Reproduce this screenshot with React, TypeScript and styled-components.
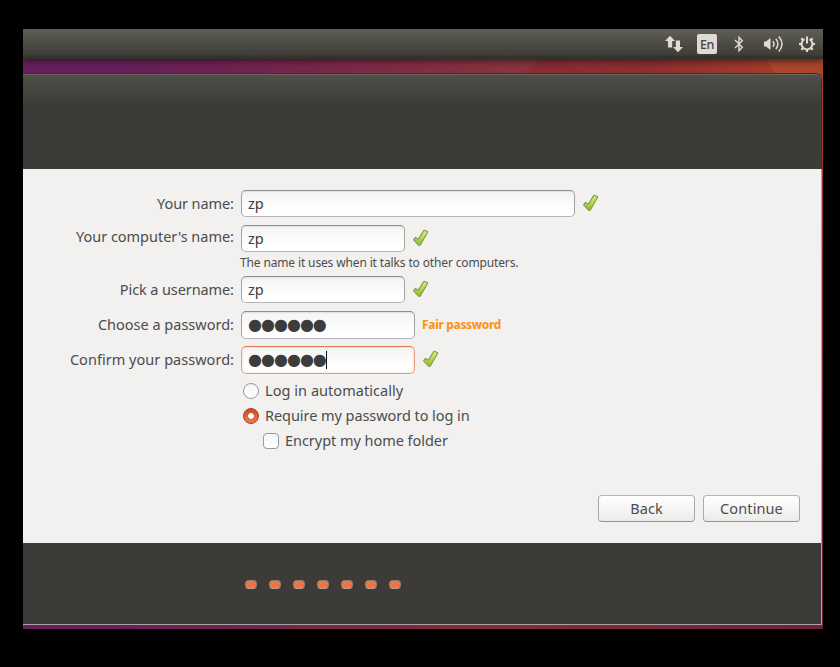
import React from "react";
import styled, { createGlobalStyle, css } from "styled-components";

const Global = createGlobalStyle`
  * { box-sizing: border-box; }
  html, body { margin: 0; background: #000; }
  body { font-family: "Noto Sans", "Open Sans", sans-serif; font-size: 14.5px; color: #4c4c4c; }
`;

const Screen = styled.div`
  width: 840px;
  height: 667px;
  padding: 29px 17px 38px 23px;
  background: #000;
  overflow: hidden;
`;

const Desktop = styled.div`
  width: 800px;
  height: 600px;
  display: flex;
  flex-direction: column;
  background:
    linear-gradient(90deg, transparent 40%, rgba(150, 70, 80, 0.25)) 0 30px / 499px 14px no-repeat,
    linear-gradient(126deg, rgba(150, 70, 80, 0.25) 50%, transparent 52%) 499px 30px / 20px 14px no-repeat,
    linear-gradient(66deg, transparent 48%, rgba(190, 90, 50, 0.3) 50%) 738px 30px / 20px 14px no-repeat,
    linear-gradient(90deg, rgba(190, 90, 50, 0.3), rgba(190, 90, 50, 0.15)) 758px 30px / 42px 14px no-repeat,
    radial-gradient(ellipse 420px 440px at 810px 20px, #ad432a 0%, #8e302f 42%, transparent 100%),
    linear-gradient(90deg, #67205f 0%, #67205d 12%, #772548 38%, #812c3c 60%, #6f2040 100%);
`;

const TopBar = styled.header`
  height: 30px;
  flex: none;
  display: flex;
  justify-content: flex-end;
  align-items: center;
  padding-right: 7px;
  background: linear-gradient(#5f5e58 0, #5b5a53 3px, #3e3d38 26px, #33322d 27px, #33322d 30px);
  box-shadow: 0 2px 7px rgba(20, 10, 15, 0.65);
  clip-path: inset(0 0 -12px 0);
  svg { display: block; flex: none; }
`;

const Language = styled.span`
  width: 20px;
  height: 20px;
  margin: 0 14px;
  border-radius: 2px;
  background: #dfdbd2;
  color: #474640;
  font-size: 12.5px;
  font-weight: 500;
  line-height: 21px;
  letter-spacing: -0.4px;
  text-align: center;
`;

const Window = styled.main`
  width: 799px;
  height: 552px;
  margin-top: 14px;
  display: flex;
  flex-direction: column;
  border-right: 1px solid #aaa69f;
  border-bottom: 1px solid #aaa69f;
  border-radius: 0 6px 0 0;
  background: #3c3b37;
`;

const Header = styled.div`
  height: 96px;
  flex: none;
  margin-right: -1px;
  border-top: 1px solid #33322e;
  border-right: 1px solid #33322e;
  border-radius: 0 6px 0 0;
  box-shadow: inset 0 1px #68675f;
  background: linear-gradient(#504f49, #3c3b37 30px);
`;

const Content = styled.section`
  height: 374px;
  flex: none;
  display: flex;
  flex-direction: column;
  justify-content: space-between;
  padding: 21px 21px 21px 0;
  background: #f2f1f0;
`;

const Form = styled.form`
  display: grid;
  grid-template-columns: 211px 1fr;
  column-gap: 7px;
  grid-template-rows: 27px 27px 8px 27px 27px 27px auto;
  row-gap: 8px;
`;

const Label = styled.label<{ $track: number; $up?: number }>`
  justify-self: end;
  white-space: nowrap;
  line-height: 27px;
  margin-top: ${p => -(p.$up ?? 0)}px;
  letter-spacing: ${p => p.$track}px;
  margin-right: ${p => -p.$track}px;
`;

const Field = styled.div<{ $tall?: boolean }>`
  grid-column: 2;
  height: ${p => (p.$tall ? 28 : 27)}px;
  display: flex;
  align-items: center;
  svg { display: block; margin: ${p => (p.$tall ? -2 : -1)}px 0 0; }
`;

const Entry = styled.div<{ $width: number; $focus?: boolean }>`
  width: ${p => p.$width}px;
  height: 100%;
  display: flex;
  align-items: center;
  padding: 0 6px 1px;
  margin-right: 7px;
  border: 1px solid;
  border-color: #8e8e8c #a3a3a1 #b4b4b2;
  border-radius: 5px;
  background: linear-gradient(#f4f4f4, #fff 80%);
  box-shadow: inset 0 1px 1px rgba(0, 0, 0, 0.08);
  color: #3c3c3c;
  ${p => p.$focus && css`
    border-color: #dd7a50 #eb9c80 #eb9c80;
    box-shadow: inset 0 0 1px 1px rgba(235, 120, 70, 0.14);
  `}
`;

const Secret = styled.span`
  font-family: "DejaVu Sans", sans-serif;
  font-size: 16px;
  line-height: 20px;
  letter-spacing: -0.99px;
  padding-top: 1px;
`;

const Caret = styled.span`
  width: 1px;
  height: 18px;
  background: #111;
`;

const Hint = styled.div`
  margin: -5px 0 0 -1px;
  font-size: 12px;
  line-height: 16px;
  letter-spacing: -0.14px;
  white-space: nowrap;
`;

const HintRow = styled.div`
  grid-column: 2;
  height: 8px;
`;

const Strength = styled.strong`
  margin-top: -2px;
  color: #ff8f0c;
  font-size: 12px;
  letter-spacing: -0.32px;
`;

const Options = styled.div`
  grid-column: 2;
  display: grid;
  grid-auto-rows: 25px;
  margin-top: -3px;
`;

const Option = styled.div<{ $indent?: boolean; $track: number }>`
  display: flex;
  align-items: center;
  gap: 6px;
  padding-left: ${p => (p.$indent ? 22 : 2)}px;
  white-space: nowrap;
  line-height: 22px;
  letter-spacing: ${p => p.$track}px;
`;

const OptionText = styled.span`
  margin-top: -2px;
`;

const Radio = styled.span<{ $on?: boolean }>`
  width: 16px;
  height: 16px;
  border-radius: 50%;
  border: 1px solid ${p => (p.$on ? "#a93f1c" : "#999")};
  background: ${p => p.$on
    ? "radial-gradient(circle, #fff 0 2.5px, transparent 3.2px), linear-gradient(#c84d24, #ec7d52)"
    : "linear-gradient(#f5f5f5, #fff)"};
`;

const Check = styled.span`
  width: 16px;
  height: 16px;
  border-radius: 4px;
  border: 1px solid #999;
  background: linear-gradient(#f5f5f5, #fff);
`;

const Actions = styled.div`
  display: flex;
  justify-content: flex-end;
  gap: 8px;
`;

const Button = styled.button<{ $track: number }>`
  width: 97px;
  height: 27px;
  padding: 0;
  border: 1px solid;
  border-color: #b5b5b3 #a9a9a7 #929290;
  border-radius: 4px;
  background: linear-gradient(#fff, #ebebea);
  color: #4c4c4c;
  font: inherit;
  line-height: 23px;
  letter-spacing: ${p => p.$track}px;
`;

const Footer = styled.footer`
  flex: 1;
  display: flex;
  gap: 12px;
  padding: 37px 0 0 222px;
`;

const Dot = styled.span`
  width: 12px;
  height: 9px;
  border: 1px solid #8b827a;
  border-bottom-color: #b3a494;
  border-radius: 4px;
  background: linear-gradient(#ee754a, #f1743f);
`;

const Tick = () => (
  <svg width="18" height="18" viewBox="0 0 18 18">
    <defs>
      <linearGradient id="leaf" x1="0" y1="0" x2="0" y2="1">
        <stop offset="0" stopColor="#dff07a" />
        <stop offset="1" stopColor="#92b92c" />
      </linearGradient>
    </defs>
    <path
      d="M1.6 10.9 3.5 8.4 6.3 10.2 11.5 1.9 Q12 1.1 12.8 1.4L15.3 2.5Q15.9 2.8 15.5 3.5L8.6 15.6Q7.6 17 6.3 15.8Z"
      fill="url(#leaf)" stroke="#7a9c4f" strokeWidth="1.1" strokeLinejoin="round"
    />
  </svg>
);

const Network = () => (
  <svg width="18" height="18" viewBox="0 0 18 18" fill="#dfdbd2">
    <path d="M5 .8 10 6H7.2V12.5H3V6H0Z" />
    <path d="M13 17.2 8 12h2.8V5.5H15V12h3Z" />
  </svg>
);

const Bluetooth = () => (
  <svg width="10" height="18" viewBox="0 0 10 18" fill="none" stroke="#dfdbd2" strokeWidth="1.4">
    <path d="M1 5 8.3 12.2 5 15.8V2.2L8.3 5.8 1 13" />
  </svg>
);

const Sound = () => (
  <svg width="22" height="18" viewBox="0 0 22 18">
    <path d="M1 6.5h2L7.5 3v12L3 11.5H1Z" fill="#dfdbd2" />
    <g fill="none" stroke="#dfdbd2" strokeWidth="1.5">
      <path d="M9.8 6.2Q12.3 9 9.8 11.8M12.8 3.8Q17 9 12.8 14.2M15.8 1.5Q22.2 9 15.8 16.5" />
    </g>
  </svg>
);

const Power = () => (
  <svg width="18" height="18" viewBox="0 0 18 18" fill="none" stroke="#dfdbd2">
    <path d="M6.5 4.2A5.4 5.4 0 1 0 11.5 4.2" strokeWidth="2" />
    <path d="M9 1.5V8.5" strokeWidth="2" />
    <path d="M1 9H4M14 9H17M9 14V17M3.3 3.3 5.3 5.3M14.7 3.3 12.7 5.3M3.3 14.7 5.3 12.7M14.7 14.7 12.7 12.7" strokeWidth="2.2" />
  </svg>
);

const Gap = styled.span<{ $w: number }>`
  width: ${p => p.$w}px;
`;

export default function App() {
  return (
    <Screen>
      <Global />
      <Desktop>
        <TopBar>
          <Network />
          <Language>En</Language>
          <Gap $w={3} />
          <Bluetooth />
          <Gap $w={19} />
          <Sound />
          <Gap $w={13} />
          <Power />
        </TopBar>
        <Window>
          <Header />
          <Content>
            <Form>
              <Label $track={-0.08}>Your name:</Label>
              <Field><Entry $width={334}>zp</Entry><Tick /></Field>
              <Label $track={-0.02} $up={2}>Your computer's name:</Label>
              <Field><Entry $width={164}>zp</Entry><Tick /></Field>
              <HintRow><Hint>The name it uses when it talks to other computers.</Hint></HintRow>
              <Label $track={-0.1}>Pick a username:</Label>
              <Field><Entry $width={164}>zp</Entry><Tick /></Field>
              <Label $track={0}>Choose a password:</Label>
              <Field $tall><Entry $width={174}><Secret>●●●●●●</Secret></Entry><Strength>Fair password</Strength></Field>
              <Label $track={0.03}>Confirm your password:</Label>
              <Field $tall><Entry $width={174} $focus><Secret>●●●●●●</Secret><Caret /></Entry><Tick /></Field>
              <Options>
                <Option $track={0.05}><Radio /><OptionText>Log in automatically</OptionText></Option>
                <Option $track={-0.06}><Radio $on /><OptionText>Require my password to log in</OptionText></Option>
                <Option $indent $track={-0.04}><Check /><OptionText>Encrypt my home folder</OptionText></Option>
              </Options>
            </Form>
            <Actions>
              <Button type="button" $track={0}>Back</Button>
              <Button type="button" $track={0.1}>Continue</Button>
            </Actions>
          </Content>
          <Footer>
            {Array.from({ length: 7 }, (_, i) => <Dot key={i} />)}
          </Footer>
        </Window>
      </Desktop>
    </Screen>
  );
}
